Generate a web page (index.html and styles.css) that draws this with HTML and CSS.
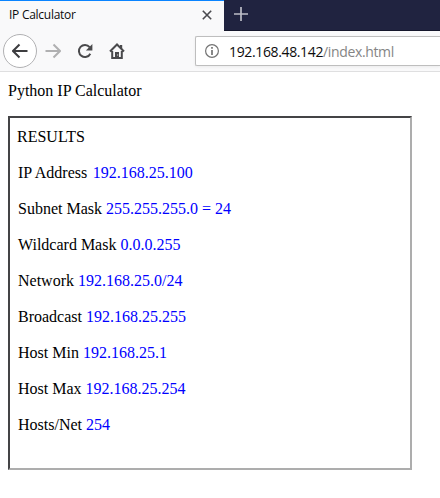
FILE: index.html
```html
<!DOCTYPE html>
<html lang="en">
<head>
<meta charset="utf-8">
<title>IP Calculator</title>
<link rel="stylesheet" href="styles.css">
</head>
<body>
<header class="tabs">
  <div class="tab">
    <span class="tab-title">IP Calculator</span>
    <svg class="close" width="10" height="10" viewBox="0 0 10 10"><path d="M.8.8l8.4 8.4M9.2.8L.8 9.2"/></svg>
  </div>
  <div class="tab-strip">
    <svg class="plus" width="14" height="14" viewBox="0 0 14 14"><path d="M7 0v14M0 7h14"/></svg>
  </div>
</header>
<nav class="toolbar">
  <span class="back"><svg width="16" height="16" viewBox="0 0 16 16"><path d="M15.5 8H1.5M7.5 1.5L1 8l6.5 6.5"/></svg></span>
  <svg class="forward" width="16" height="16" viewBox="0 0 16 16"><path d="M.5 8h14M8.5 1.5L15 8l-6.5 6.5"/></svg>
  <svg class="reload" width="16" height="16" viewBox="0 0 16 16"><path d="M12.6 4.2A6 6 0 1 0 13.3 10.7"/><path class="solid" d="M15.4 1v6.5H8.9z"/></svg>
  <svg class="home" width="16" height="16" viewBox="0 0 16 16"><path d="M1 8.5L8 1.5l7 7M3.2 8v7h9.6V8"/><path class="solid" d="M6 9h4v6H6zM11 2h2.2v4.5L11 4.4z"/><path class="knob" d="M8.2 11.5h1v1h-1z"/></svg>
  <div class="url">
    <svg class="info" width="14" height="14" viewBox="0 0 14 14"><circle cx="7" cy="7" r="6.4"/><path d="M7 6v5M7 3v1.8"/></svg>
    <span class="address">192.168.48.142<span class="path">/index.html</span></span>
  </div>
</nav>
<main class="page">
  <p class="heading">Python IP Calculator</p>
  <section class="results">
    <p class="title">RESULTS</p>
    <p class="ip">IP Address <span class="value">192.168.25.100</span></p>
    <p>Subnet Mask <span class="value">255.255.255.0 = 24</span></p>
    <p>Wildcard Mask <span class="value">0.0.0.255</span></p>
    <p>Network <span class="value">192.168.25.0/24</span></p>
    <p>Broadcast <span class="value">192.168.25.255</span></p>
    <p>Host Min <span class="value">192.168.25.1</span></p>
    <p>Host Max <span class="value">192.168.25.254</span></p>
    <p>Hosts/Net <span class="value">254</span></p>
  </section>
</main>
</body>
</html>
```
FILE: styles.css
```css
* { box-sizing: border-box; }
body { margin: 0; background: #fff; overflow: hidden; }
svg { flex: none; fill: none; }
.tabs { display: flex; height: 31px; background: #f9f9fa; font-family: "Open Sans", sans-serif; }
.tab { width: 224px; flex: none; display: flex; align-items: center; justify-content: space-between; padding: 0 12px 2px 9px; border-top: 1px solid #0a84ff; }
.tab-title { font-size: 12px; line-height: 16px; letter-spacing: -0.27px; color: #0c0c0d; }
.close { stroke: #4a4a4f; stroke-width: 1.6; }
.tab-strip { flex: 1; background: #202340; border-bottom: 1px solid #14162b; padding: 7px 0 0 10px; }
.plus { display: block; stroke: #bcbdc6; stroke-width: 1.7; }
.toolbar { display: flex; align-items: center; height: 41px; padding-left: 3px; background: #f9f9fa; border-bottom: 1px solid #dfdfe0; }
.back { flex: none; width: 34px; height: 34px; display: flex; align-items: center; justify-content: center; border: 1px solid #b1b1b3; border-radius: 50%; background: #fff; }
.back svg { stroke: #3d3d40; stroke-width: 2; }
.forward { margin-left: 8px; stroke: #b0b0b1; stroke-width: 2; }
.reload { margin-left: 16px; stroke: #4a4a4c; stroke-width: 2; }
.home { margin-left: 16px; stroke: #4a4a4c; stroke-width: 2; }
.solid { fill: #4a4a4c; stroke: none; }
.knob { fill: #f9f9fa; stroke: none; }
.url { margin-left: 70px; flex: 1; height: 30px; display: flex; align-items: center; padding-left: 9px; background: #fff; border: 1px solid #bebebe; border-right: 0; border-radius: 2px 0 0 2px; box-shadow: 0 1px 3px rgba(0,0,0,.06); }
.info { stroke: #737373; stroke-width: 1.2; }
.info path { stroke-width: 1.7; }
.address { margin-left: 10px; padding-top: 2px; font: 14px/20px "Open Sans", sans-serif; letter-spacing: -0.36px; color: #0c0c0d; white-space: nowrap; }
.path { color: #858585; }
.page { padding: 10px 8px 0; font: 16px/18px "Liberation Serif", serif; color: #000; }
.page p { margin: 0; }
.heading { height: 34px; }
.results { width: 404px; height: 354px; padding: 10px 8px; border: 2px solid; border-color: #444446 #adadad #adadad #444446; }
.results p { margin-bottom: 18px; }
.results .title { margin-left: -1px; }
.ip .value { margin-left: 1.5px; }
.value { color: #00f; }
```
